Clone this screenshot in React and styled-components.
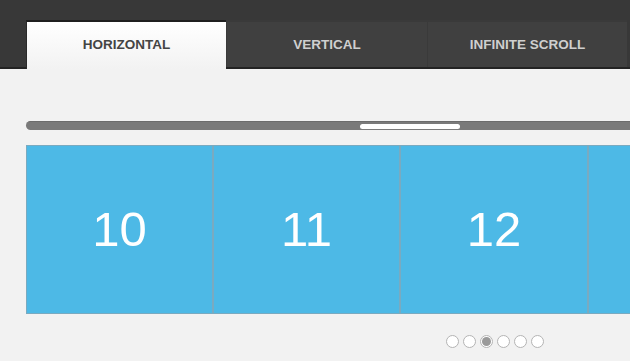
import React from "react";
import styled, { createGlobalStyle } from "styled-components";

const GlobalStyle = createGlobalStyle`
  html, body {
    margin: 0;
    padding: 0;
    background: #f2f2f2;
    font-family: "Liberation Sans", Arial, sans-serif;
    overflow: hidden;
  }
`;

const Page = styled.div`
  width: 630px;
  height: 361px;
  overflow: hidden;
  background: #f2f2f2;
`;

const Header = styled.header`
  height: 69px;
  box-sizing: border-box;
  background: #383838;
  border-bottom: 2px solid #232323;
  padding: 20px 0 0 26px;
  display: flex;
`;

const TabRow = styled.nav`
  display: flex;
  height: 47px;
`;

const Tab = styled.div`
  width: ${(p) => p.$width || 200}px;
  flex-shrink: 0;
  display: flex;
  align-items: center;
  justify-content: center;
  font-size: 13.5px;
  font-weight: bold;
  text-transform: uppercase;
  color: ${(p) => (p.$active ? "#444" : "#cfcfcf")};
  background: ${(p) =>
    p.$active ? "linear-gradient(#ffffff, #f2f2f2)" : "#404040"};
  border-top: 2px solid ${(p) => (p.$active ? "#1f1f1f" : "#3a3a3a")};
  border-left: 1px solid ${(p) => (p.$active ? "#2a2a2a" : "#3a3a3a")};
  height: ${(p) => (p.$active ? "49px" : "47px")};
  box-sizing: border-box;
  padding-bottom: ${(p) => (p.$active ? "2px" : "0")};
`;

const Content = styled.main`
  padding: 52px 0 0 26px;
`;

const ScrollTrack = styled.div`
  height: 9px;
  width: 620px;
  background: #7a7a7a;
  border-radius: 5px 0 0 5px;
  border-top: 1px solid #6c6c6c;
  box-sizing: border-box;
  display: flex;
  align-items: center;
  padding-left: 334px;
`;

const ScrollThumb = styled.div`
  width: 100px;
  height: 5px;
  background: #ffffff;
  border-radius: 3px;
`;

const Viewport = styled.div`
  margin-top: 15px;
  overflow: hidden;
`;

const Track = styled.div`
  display: flex;
  width: max-content;
`;

const Slide = styled.div`
  width: ${(p) => p.$width || 187}px;
  height: 169px;
  box-sizing: border-box;
  background: #4db9e6;
  border: 1px solid #7aaac0;
  display: flex;
  align-items: center;
  justify-content: center;
  color: #ffffff;
  font-size: 49px;
  padding-bottom: 2px;
`;

const Pager = styled.div`
  display: flex;
  gap: 4px;
  margin: 21px 0 0 420px;
`;

const Dot = styled.span`
  width: 13px;
  height: 13px;
  box-sizing: border-box;
  border-radius: 50%;
  border: 1px solid #b4b4b4;
  background: #ffffff;
  display: flex;
  align-items: center;
  justify-content: center;

  &::after {
    content: "";
    width: 9px;
    height: 9px;
    border-radius: 50%;
    background: ${(p) => (p.$active ? "#9a9a9a" : "transparent")};
  }
`;

const tabs = [
  { label: "Horizontal", active: true, width: 200 },
  { label: "Vertical", width: 201 },
  { label: "Infinite Scroll", width: 200 },
];

const slides = [
  { label: "10", width: 187 },
  { label: "11", width: 187 },
  { label: "12", width: 188 },
  { label: "", width: 187 },
];

export default function App() {
  return (
    <Page>
      <GlobalStyle />
      <Header>
        <TabRow>
          {tabs.map((t) => (
            <Tab key={t.label} $active={t.active} $width={t.width}>
              {t.label}
            </Tab>
          ))}
        </TabRow>
      </Header>
      <Content>
        <ScrollTrack>
          <ScrollThumb />
        </ScrollTrack>
        <Viewport>
          <Track>
            {slides.map((s, i) => (
              <Slide key={i} $width={s.width}>
                {s.label}
              </Slide>
            ))}
          </Track>
        </Viewport>
        <Pager>
          {[0, 1, 2, 3, 4, 5].map((i) => (
            <Dot key={i} $active={i === 2} />
          ))}
        </Pager>
      </Content>
    </Page>
  );
}
